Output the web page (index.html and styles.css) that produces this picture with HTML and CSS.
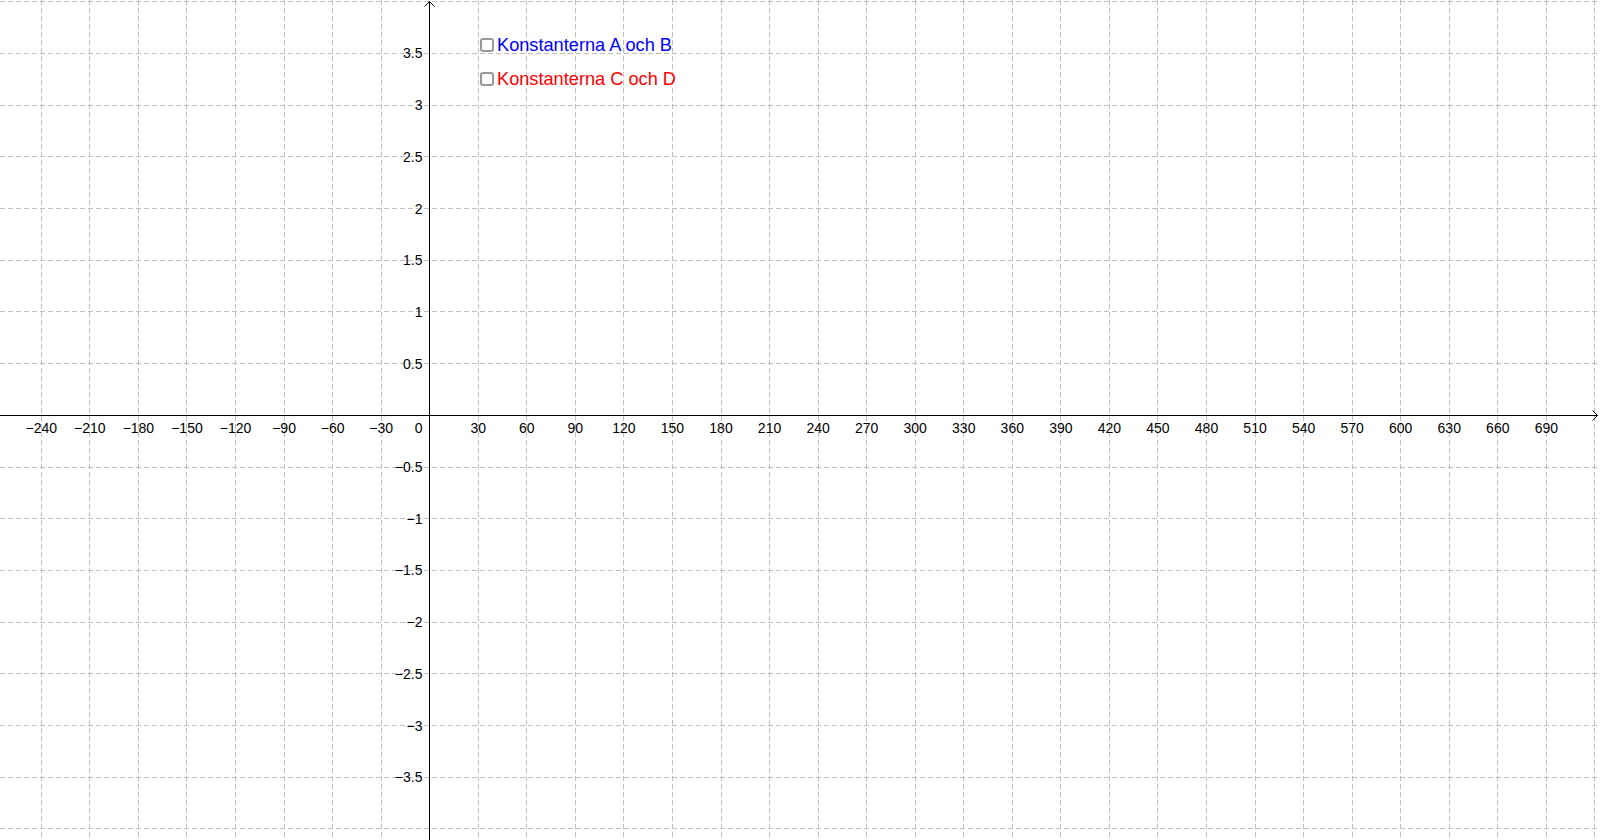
FILE: index.html
```html
<!DOCTYPE html>
<html lang="sv">
<head>
<meta charset="utf-8">
<title>Graf</title>
<link rel="stylesheet" href="styles.css">
</head>
<body>
<main class="graphics-view">
  <svg class="canvas" width="1600" height="840" viewBox="0 0 1600 840">
    <!-- dashed grid: one vertical line every 30 units, one horizontal line every 0.5 units -->
    <path class="grid" d="M41.3 0V840M89.85 0V840M138.4 0V840M186.95 0V840M235.5 0V840M284.05 0V840M332.6 0V840M381.15 0V840M478.25 0V840M526.8 0V840M575.35 0V840M623.9 0V840M672.45 0V840M721 0V840M769.55 0V840M818.1 0V840M866.65 0V840M915.2 0V840M963.75 0V840M1012.3 0V840M1060.85 0V840M1109.4 0V840M1157.95 0V840M1206.5 0V840M1255.05 0V840M1303.6 0V840M1352.15 0V840M1400.7 0V840M1449.25 0V840M1497.8 0V840M1546.35 0V840M1594.9 0V840"/>
    <path class="grid" d="M0 1.7H1600M0 53.4H1600M0 105.1H1600M0 156.8H1600M0 208.5H1600M0 260.2H1600M0 311.9H1600M0 363.6H1600M0 467H1600M0 518.7H1600M0 570.4H1600M0 622.1H1600M0 673.8H1600M0 725.5H1600M0 777.2H1600M0 828.9H1600"/>

    <!-- axes with open arrow heads -->
    <path class="axis" d="M0 415.5H1597.5M429.5 840V1.5"/>
    <path class="arrow" d="M1592.5 410.5L1597.5 415.5L1592.5 420.5M424.5 6.5L429.5 1.5L434.5 6.5"/>

    <!-- x-axis numbers -->
    <g class="tick-x">
      <text x="41.3" y="432.5">−240</text>
      <text x="89.85" y="432.5">−210</text>
      <text x="138.4" y="432.5">−180</text>
      <text x="186.95" y="432.5">−150</text>
      <text x="235.5" y="432.5">−120</text>
      <text x="284.05" y="432.5">−90</text>
      <text x="332.6" y="432.5">−60</text>
      <text x="381.15" y="432.5">−30</text>
      <text x="478.25" y="432.5">30</text>
      <text x="526.8" y="432.5">60</text>
      <text x="575.35" y="432.5">90</text>
      <text x="623.9" y="432.5">120</text>
      <text x="672.45" y="432.5">150</text>
      <text x="721" y="432.5">180</text>
      <text x="769.55" y="432.5">210</text>
      <text x="818.1" y="432.5">240</text>
      <text x="866.65" y="432.5">270</text>
      <text x="915.2" y="432.5">300</text>
      <text x="963.75" y="432.5">330</text>
      <text x="1012.3" y="432.5">360</text>
      <text x="1060.85" y="432.5">390</text>
      <text x="1109.4" y="432.5">420</text>
      <text x="1157.95" y="432.5">450</text>
      <text x="1206.5" y="432.5">480</text>
      <text x="1255.05" y="432.5">510</text>
      <text x="1303.6" y="432.5">540</text>
      <text x="1352.15" y="432.5">570</text>
      <text x="1400.7" y="432.5">600</text>
      <text x="1449.25" y="432.5">630</text>
      <text x="1497.8" y="432.5">660</text>
      <text x="1546.35" y="432.5">690</text>
    </g>

    <!-- y-axis numbers and the origin -->
    <g class="tick-y">
      <text x="422.5" y="432.5">0</text>
      <text x="422.5" y="58.4">3.5</text>
      <text x="422.5" y="110.1">3</text>
      <text x="422.5" y="161.8">2.5</text>
      <text x="422.5" y="213.5">2</text>
      <text x="422.5" y="265.2">1.5</text>
      <text x="422.5" y="316.9">1</text>
      <text x="422.5" y="368.6">0.5</text>
      <text x="422.5" y="472">−0.5</text>
      <text x="422.5" y="523.7">−1</text>
      <text x="422.5" y="575.4">−1.5</text>
      <text x="422.5" y="627.1">−2</text>
      <text x="422.5" y="678.8">−2.5</text>
      <text x="422.5" y="730.5">−3</text>
      <text x="422.5" y="782.2">−3.5</text>
    </g>
  </svg>

  <div class="toggles">
    <label class="toggle toggle-ab">
      <input type="checkbox" class="toggle-box">
      <span>Konstanterna A och B</span>
    </label>
    <label class="toggle toggle-cd">
      <input type="checkbox" class="toggle-box">
      <span>Konstanterna C och D</span>
    </label>
  </div>
</main>
</body>
</html>
```

FILE: styles.css
```css
html, body {
  margin: 0;
  padding: 0;
  background: #ffffff;
}

.graphics-view {
  position: relative;
  width: 1600px;
  height: 840px;
  overflow: hidden;
  font-family: "Liberation Sans", Arial, sans-serif;
}

.canvas {
  display: block;
}

.grid {
  fill: none;
  stroke: #c0c0c0;
  stroke-width: 1;
  stroke-dasharray: 5 3;
  shape-rendering: crispEdges;
}

.axis {
  fill: none;
  stroke: #000000;
  stroke-width: 1;
}

.arrow {
  fill: none;
  stroke: #000000;
  stroke-width: 1;
}

.tick-x text,
.tick-y text {
  font-family: "Liberation Sans", Arial, sans-serif;
  font-size: 14px;
  fill: #000000;
}

.tick-x text {
  text-anchor: middle;
}

.tick-y text {
  text-anchor: end;
}

/* check boxes floating over the drawing */
.toggles {
  position: absolute;
  left: 480px;
  top: 33px;
  display: flex;
  flex-direction: column;
  gap: 10px;
}

.toggle {
  display: flex;
  align-items: center;
  gap: 3px;
  height: 24px;
  line-height: 24px;
  font-size: 18.2px;
  cursor: pointer;
}

.toggle-box {
  appearance: none;
  -webkit-appearance: none;
  box-sizing: border-box;
  width: 14px;
  height: 14px;
  margin: 0;
  border: 2px solid #999999;
  border-radius: 3px;
  background: #ffffff;
}

.toggle-ab {
  color: #0000ff;
}

.toggle-cd {
  color: #ff0000;
}
```
